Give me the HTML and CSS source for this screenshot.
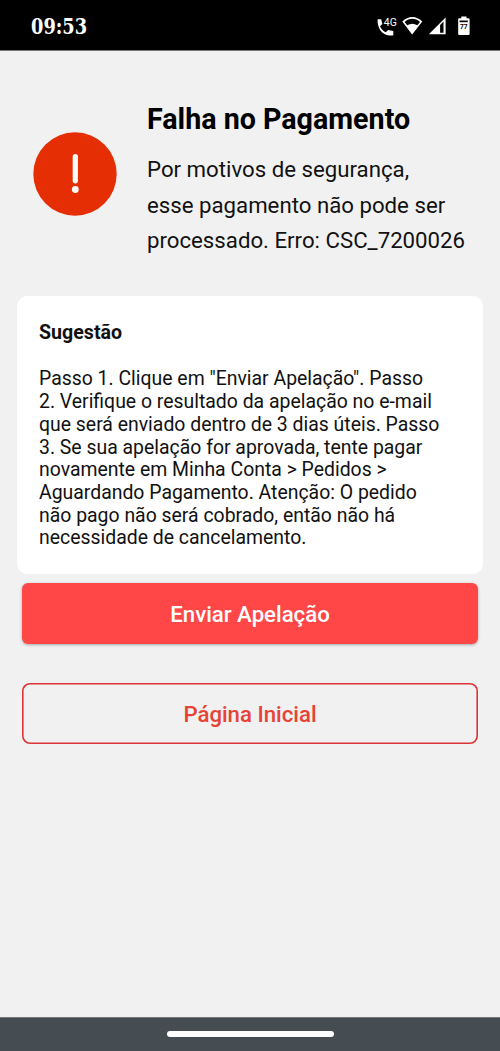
FILE: index.html
```html
<!DOCTYPE html>
<html lang="pt-BR">
<head>
<meta charset="utf-8">
<meta name="viewport" content="width=device-width">
<title>Falha no Pagamento</title>
<link rel="stylesheet" href="styles.css">
</head>
<body>
<div class="status-bar">
  <span class="clock">09:53</span>
  <svg class="status-icons" width="100" height="26" viewBox="0 0 100 26" fill="#fff">
    <path d="M2.600 7.200h3.600l1.200 4.700-2.400 2.300c1.300 2.800 3.100 4.700 5.800 6l2.300-2.300 5.200 1.200v4.100c-2 .6-6 .2-8.800-1.300C5.100 19.600 2.300 14.200 2.600 7.200z"/>
    <text class="network" x="8.800" y="13.500" textLength="13" lengthAdjust="spacingAndGlyphs">4G</text>
    <g transform="translate(4.800 -1.700)">
    <path fill-rule="evenodd" d="M32.300 24.300 22.500 11.300C28.500 5.300 36.500 5.300 42.500 11.300zM24.800 11.600l2.600 3.300c3.300-2 6.900-2 10.200 0l2.600-3.300c-4.700-4.100-10.700-4.100-15.400 0z"/>
    <path fill-rule="evenodd" d="M49 24 65.800 7.200V24zM60.300 14.800V22.500h3.400V11.200z"/>
    <path d="M81.500 6.200h5.200v1.700h2q1.100 0 1.100 1.100v14.800q0 1-1.100 1h-9.300q-1 0-1-1V9q0-1.100 1-1.100h2.100z"/>
    <path fill="#000" d="M79.800 10.200h8.200v1.700h-8.200z"/>
    <text class="battery" x="80.200" y="18.900" textLength="7.600" lengthAdjust="spacingAndGlyphs">77</text>
    </g>
  </svg>
</div>
<main class="page">
  <section class="notice">
    <svg class="alert" width="84" height="84" viewBox="0 0 84 84">
      <circle cx="42" cy="42" r="41.700" fill="#e62e04"/>
      <path d="M42.300 24.700v24.100" stroke="#fff" stroke-width="5.200" stroke-linecap="round"/>
      <circle cx="42.300" cy="57.500" r="3.400" fill="#fff"/>
    </svg>
    <div class="notice-text">
      <h1>Falha no Pagamento</h1>
      <p>Por motivos de segurança,<br>esse pagamento não pode ser<br>processado. Erro: CSC_7200026</p>
    </div>
  </section>
  <section class="card">
    <h2>Sugestão</h2>
    <p>Passo 1. Clique em "Enviar Apelação". Passo<br>2. Verifique o resultado da apelação no e-mail<br>que será enviado dentro de 3 dias úteis. Passo<br>3. Se sua apelação for aprovada, tente pagar<br>novamente em Minha Conta &gt; Pedidos &gt;<br>Aguardando Pagamento. Atenção: O pedido<br>não pago não será cobrado, então não há<br>necessidade de cancelamento.</p>
  </section>
  <div class="actions">
    <button class="button primary">Enviar Apelação</button>
    <button class="button outline">Página Inicial</button>
  </div>
</main>
<div class="nav-bar"><div class="handle"></div></div>
</body>
</html>
```
FILE: styles.css
```css
* { box-sizing: border-box; }
body {
  margin: 0;
  height: 1051px;
  display: flex;
  flex-direction: column;
  background: #f1f1f1;
  color: #111;
  font-family: Roboto, sans-serif;
}
h1, h2, p { margin: 0; white-space: nowrap; }
.status-bar {
  flex: none;
  height: 51px;
  padding: 0 25px 0 31px;
  display: flex;
  align-items: center;
  justify-content: space-between;
  background: #000;
  border-bottom: 1px solid #777;
}
.clock {
  padding-top: 2px;
  color: #fff;
  font: bold 22.500px/28px "DejaVu Serif Condensed", "DejaVu Serif", serif;
  font-stretch: condensed;
  transform: scaleX(.88);
  transform-origin: left;
}
.network { font: 11.500px Roboto, sans-serif; }
.battery { font: bold 7.500px Roboto, sans-serif; fill: #000; }
.page { flex: 1; }
.notice {
  height: 245px;
  padding: 50px 0 0 33px;
  display: flex;
}
.alert { flex: none; margin-top: 31px; }
.notice-text { margin-left: 30px; }
h1 { color: #000; font-size: 28.650px; line-height: 37px; font-weight: 700; }
.notice p { margin-top: 14px; font-size: 22.230px; line-height: 35.700px; }
.card {
  height: 278px;
  margin: 0 17px;
  padding: 25px 22px;
  background: #fff;
  border-radius: 10px;
}
h2 { font-size: 19.600px; line-height: 24px; font-weight: 700; }
.card p { margin-top: 23.400px; font-size: 19.420px; line-height: 22.700px; }
.actions {
  padding: 9px 22px 0;
  display: flex;
  flex-direction: column;
  gap: 39px;
}
.button {
  height: 61px;
  padding: 0;
  border: 0;
  border-radius: 6px;
  font: 500 22.200px/28px Roboto, sans-serif;
}
.primary { background: #ff4747; color: #fff; box-shadow: 0 1px 3px rgba(0, 0, 0, .3); }
.outline { background: transparent; color: #e64336; box-shadow: inset 0 0 0 1.600px #dc3438; border-radius: 8px; }
.nav-bar {
  flex: none;
  height: 34px;
  padding-top: 13px;
  background: #454d53;
  border-top: 1px solid #777;
}
.handle { width: 167px; height: 6px; margin: 0 auto; border-radius: 3px; background: #fff; }
```
